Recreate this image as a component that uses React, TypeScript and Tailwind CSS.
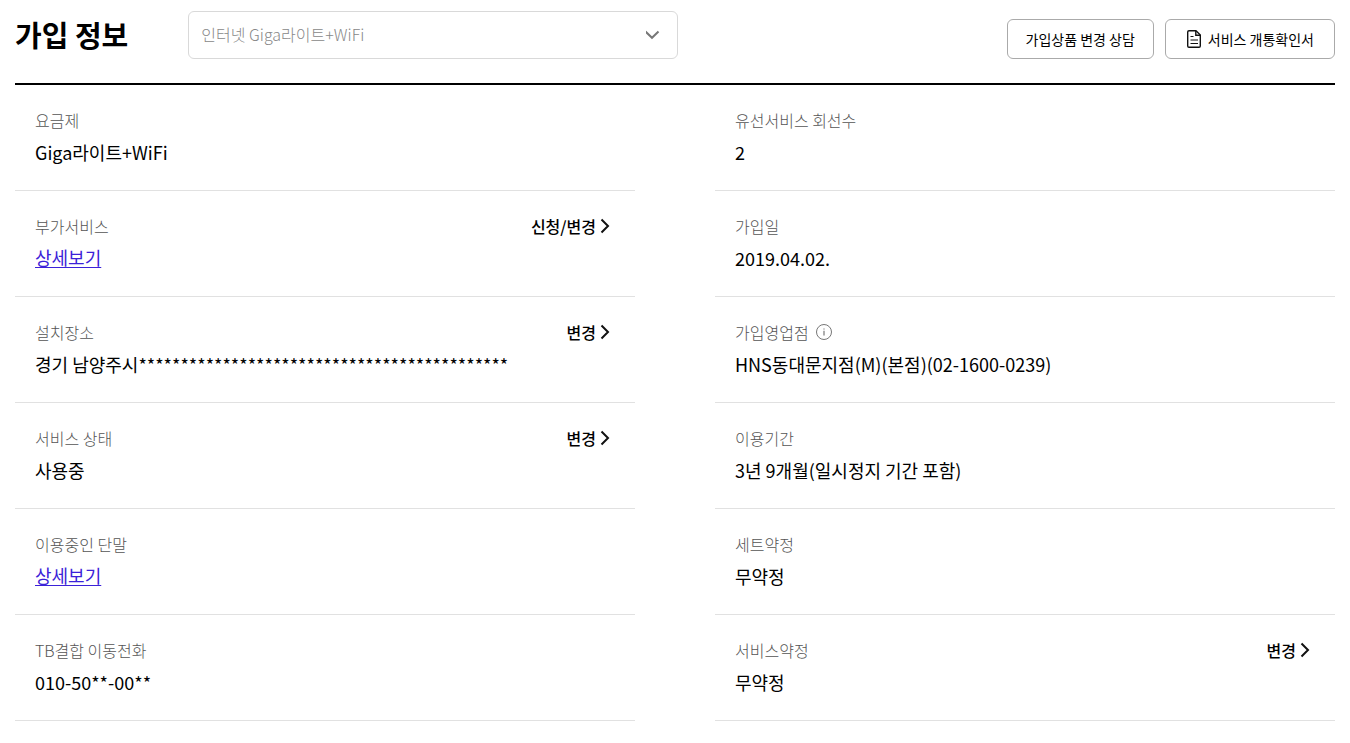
import React from "react";

type Item = {
  label: string;
  value: string;
  link?: boolean;
  action?: string;
  info?: boolean;
};

const leftItems: Item[] = [
  { label: "요금제", value: "Giga라이트+WiFi" },
  { label: "부가서비스", value: "상세보기", link: true, action: "신청/변경" },
  { label: "설치장소", value: "경기 남양주시" + "*".repeat(44), action: "변경" },
  { label: "서비스 상태", value: "사용중", action: "변경" },
  { label: "이용중인 단말", value: "상세보기", link: true },
  { label: "TB결합 이동전화", value: "010-50**-00**" },
];

const rightItems: Item[] = [
  { label: "유선서비스 회선수", value: "2" },
  { label: "가입일", value: "2019.04.02." },
  { label: "가입영업점", value: "HNS동대문지점(M)(본점)(02-1600-0239)", info: true },
  { label: "이용기간", value: "3년 9개월(일시정지 기간 포함)" },
  { label: "세트약정", value: "무약정" },
  { label: "서비스약정", value: "무약정", action: "변경" },
];

function ChevronDown() {
  return (
    <svg className="pointer-events-none absolute right-4 top-4 size-4" viewBox="0 0 16 16" fill="none" stroke="#777" strokeWidth="2">
      <path d="M-0.5 4.5 L6 10.8 L12.5 4.5" />
    </svg>
  );
}

function ChevronRight() {
  return (
    <svg className="h-4 w-2.5" viewBox="0 0 10 16" fill="none" stroke="#111" strokeWidth="2">
      <path d="M1.5 1.5 L8 8 L1.5 14.5" />
    </svg>
  );
}

function DocumentIcon() {
  return (
    <svg className="h-5 w-4" viewBox="0 0 16 20" fill="none" stroke="#111" strokeWidth="1.4">
      <path d="M10 1.7 H3 Q1.7 1.7 1.7 3 V17 Q1.7 18.3 3 18.3 H13 Q14.3 18.3 14.3 17 V6 Z" strokeLinejoin="round" />
      <path d="M9.8 1.7 V6.2 H14.3" />
      <path d="M4.5 7.5 H7.5 M4.5 11 H12 M4.5 14.5 H12" strokeWidth="1.2" />
    </svg>
  );
}

function InfoIcon() {
  return (
    <svg className="size-4" viewBox="0 0 16 16" fill="none" stroke="#777" strokeWidth="1">
      <circle cx="8" cy="8" r="7.5" />
      <path d="M8 6.8 V11.6" strokeWidth="1.2" />
      <path d="M8 4.4 V5.6" strokeWidth="1.2" />
    </svg>
  );
}

function InfoList({ items }: { items: Item[] }) {
  return (
    <dl>
      {items.map((item) => (
        <div key={item.label} className="relative border-b border-[#e1e1e1] px-5 pb-[25px] pt-[23px]">
          <dt className="flex items-center gap-[7px] text-base font-light leading-6 text-[#555]">
            {item.label}
            {item.info && (
              <button type="button" aria-label="가입영업점 안내">
                <InfoIcon />
              </button>
            )}
          </dt>
          <dd className="mt-2 text-lg leading-[25px] text-black">
            {item.link ? (
              <a href="#" className="block w-fit pb-0.5 leading-[23px] text-[#3b22d8] underline underline-offset-2">
                {item.value}
              </a>
            ) : (
              item.value
            )}
          </dd>
          {item.action && (
            <dd className="absolute right-[25px] top-[23px]">
              <button type="button" className="flex items-center gap-1 text-base font-medium leading-6 text-black">
                {item.action}
                <ChevronRight />
              </button>
            </dd>
          )}
        </div>
      ))}
    </dl>
  );
}

export default function App() {
  return (
    <main className="bg-white px-[15px] pt-[11px] font-['Noto_Sans_CJK_KR',sans-serif] text-black">
      <header className="flex items-start justify-between border-b-2 border-black pb-6">
        <div className="flex items-start gap-[60px]">
          <h1 className="text-[29px] font-bold leading-[46px]">가입 정보</h1>
          <div className="relative w-[490px]">
            <select
              aria-label="가입 상품"
              className="h-12 w-full appearance-none rounded-md border border-[#d9d9d9] bg-white pb-0.5 pl-3 pr-10 text-base font-light text-[#888]"
            >
              <option>인터넷 Giga라이트+WiFi</option>
            </select>
            <ChevronDown />
          </div>
        </div>
        <div className="mt-2 flex gap-[11px]">
          <button type="button" className="h-10 rounded-md border border-[#aaa] px-[18px] text-sm">
            가입상품 변경 상담
          </button>
          <button type="button" className="flex h-10 items-center gap-1.5 rounded-md border border-[#aaa] px-5 text-sm">
            <DocumentIcon />
            서비스 개통확인서
          </button>
        </div>
      </header>

      <section className="grid grid-cols-2 gap-20">
        <InfoList items={leftItems} />
        <InfoList items={rightItems} />
      </section>
    </main>
  );
}
